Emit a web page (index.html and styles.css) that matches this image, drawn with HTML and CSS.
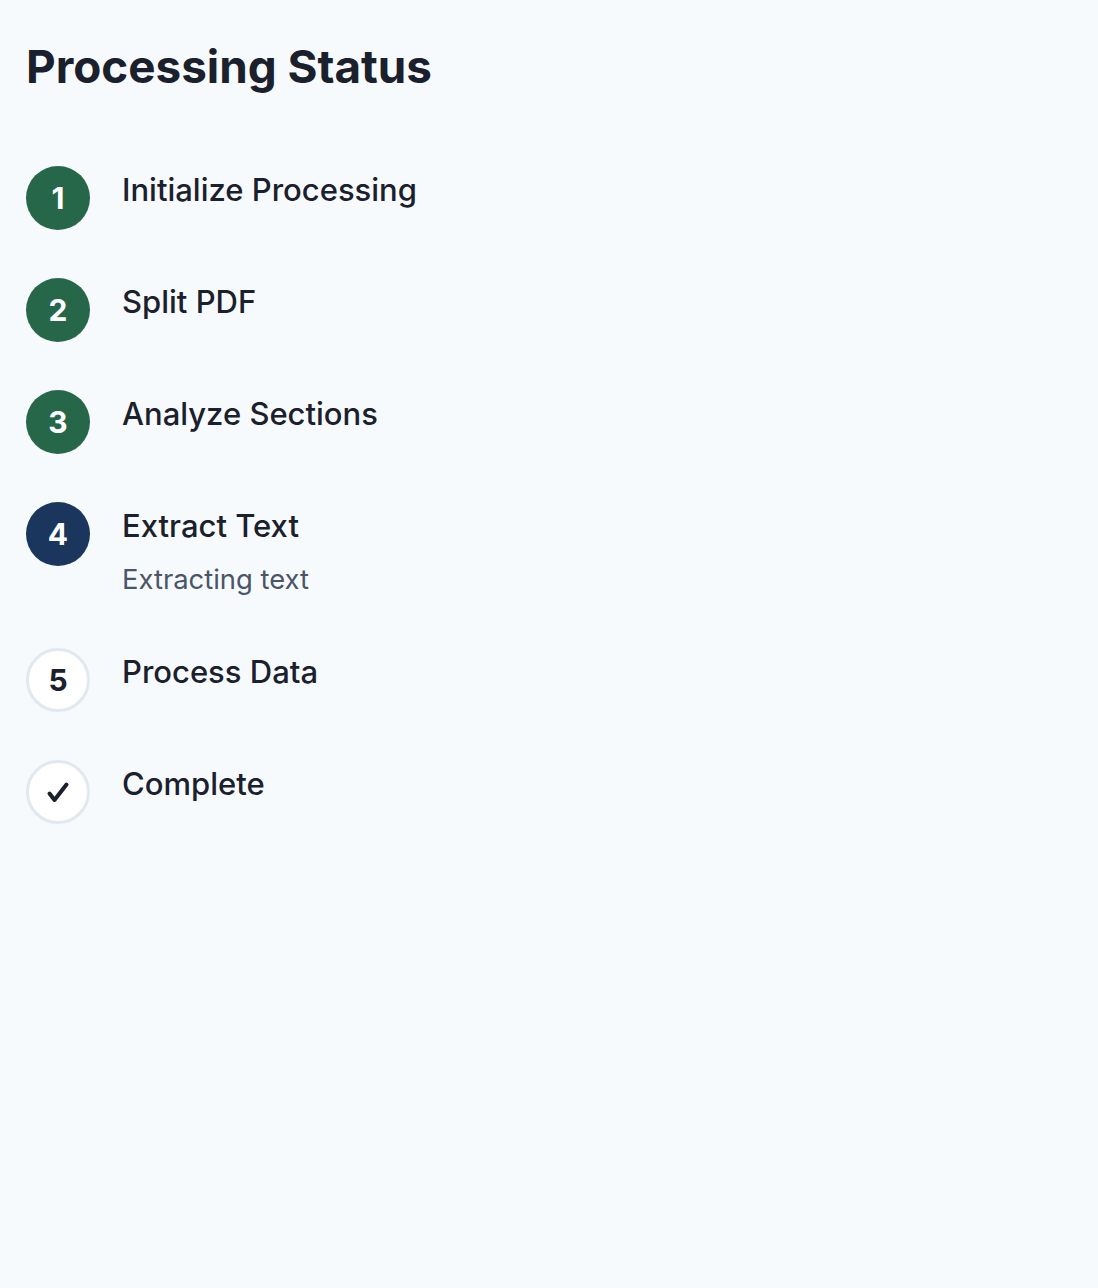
FILE: index.html
```html
<!DOCTYPE html>
<html lang="en">
<head>
<meta charset="utf-8">
<title>Processing Status</title>
<link rel="stylesheet" href="styles.css">
</head>
<body>
<main class="page">
  <h1 class="title">Processing Status</h1>
  <ol class="steps">
    <li class="step">
      <div class="badge badge-done">1</div>
      <div class="step-body"><div class="step-label">Initialize Processing</div></div>
    </li>
    <li class="step">
      <div class="badge badge-done">2</div>
      <div class="step-body"><div class="step-label">Split PDF</div></div>
    </li>
    <li class="step">
      <div class="badge badge-done">3</div>
      <div class="step-body"><div class="step-label">Analyze Sections</div></div>
    </li>
    <li class="step">
      <div class="badge badge-active">4</div>
      <div class="step-body">
        <div class="step-label">Extract Text</div>
        <div class="step-desc">Extracting text</div>
      </div>
    </li>
    <li class="step">
      <div class="badge badge-pending">5</div>
      <div class="step-body"><div class="step-label">Process Data</div></div>
    </li>
    <li class="step">
      <div class="badge badge-pending">
        <svg class="check" viewBox="0 0 24 24" width="24" height="24" aria-hidden="true"><path d="M3.5 13.5 L8.5 20 L20.5 4.5" fill="none" stroke="currentColor" stroke-width="4" stroke-linecap="round" stroke-linejoin="round"/></svg>
      </div>
      <div class="step-body"><div class="step-label">Complete</div></div>
    </li>
  </ol>
</main>
</body>
</html>
```
FILE: styles.css
```css
html, body {
  margin: 0;
  padding: 0;
  background: #F7FAFC;
}
body {
  font-family: Inter, "Noto Sans", "Liberation Sans", sans-serif;
  color: #1A202C;
}
.page {
  padding: 38px 26px;
}
.title {
  margin: 0;
  font-size: 45.8px;
  line-height: 58px;
  font-weight: 700;
  color: #1A202C;
}
.steps {
  list-style: none;
  margin: 70px 0 0 0;
  padding: 0;
  display: flex;
  flex-direction: column;
  gap: 48px;
}
.step {
  display: flex;
  align-items: flex-start;
  gap: 32px;
}
.badge {
  flex: none;
  width: 64px;
  height: 64px;
  border-radius: 50%;
  box-sizing: border-box;
  display: flex;
  align-items: center;
  justify-content: center;
  font-size: 30px;
  font-weight: 700;
  line-height: 1;
}
.badge-done {
  background: #276749;
  color: #fff;
}
.badge-active {
  background: #1A365D;
  color: #fff;
}
.badge-pending {
  background: #fff;
  border: 3px solid #E2E8F0;
  color: #1A202C;
}
.check {
  display: block;
}
.step-label {
  font-size: 31px;
  line-height: 48px;
  font-weight: 500;
  color: #1A202C;
}
.step-desc {
  margin-top: 9px;
  font-size: 27.4px;
  line-height: 41px;
  color: #4A5568;
}
```
